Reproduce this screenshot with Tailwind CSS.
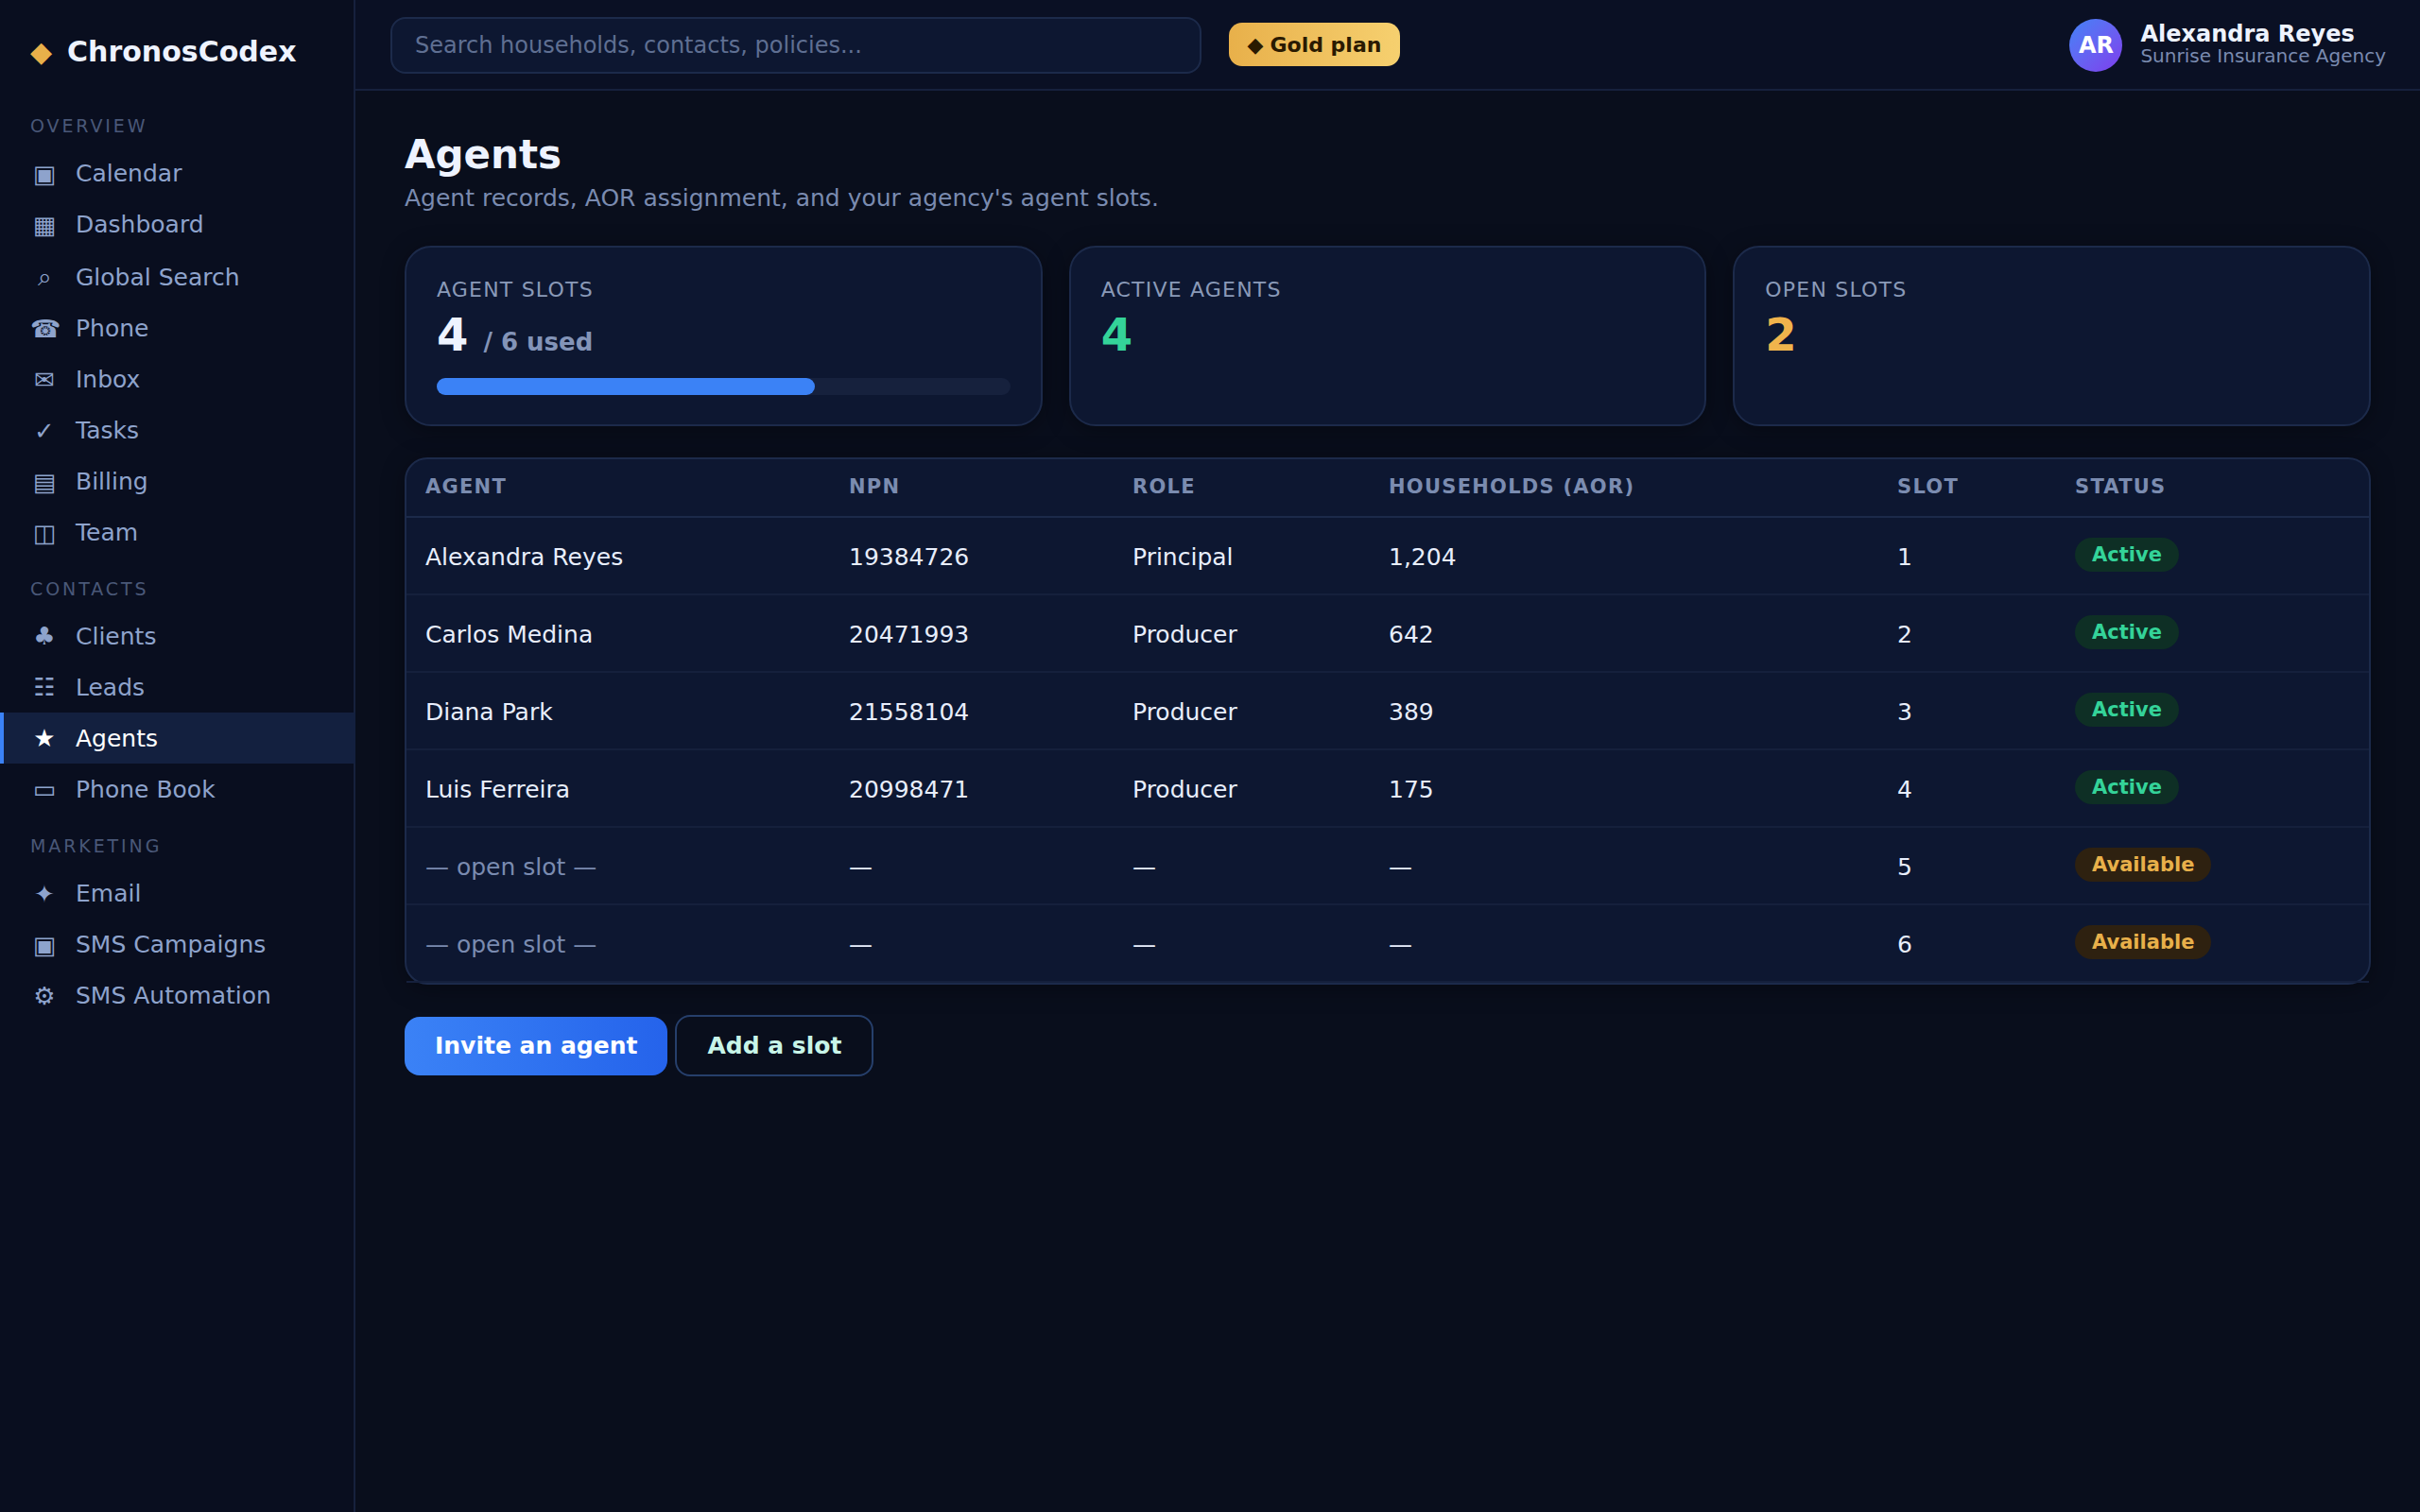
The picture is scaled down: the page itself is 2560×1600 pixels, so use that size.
<!DOCTYPE html>
<html lang="en">
<head>
    <meta charset="UTF-8">
    <title>Agents - ChronosCodex</title>
    <script src="https://cdn.jsdelivr.net/npm/@tailwindcss/browser@4"></script>
</head>
<body class="flex h-screen overflow-hidden bg-[#090e1c] font-['DejaVu_Sans',sans-serif] text-[25px] text-[#e8eefc]">
    <!-- Sidebar -->
    <aside class="w-[376px] shrink-0 border-r-2 border-[#16213d] bg-[#090e1f]">
        <div class="flex h-[102px] items-center gap-[16px] pt-[6px] pl-[32px] text-[30px] font-bold text-[#eef3ff]">
            <span class="text-[#e8b04a]">◆</span>
            <span>ChronosCodex</span>
        </div>
        <nav class="text-[#8ea3cc]">
            <p class="mt-[17px] mb-[9px] pl-[32px] text-[19px] tracking-[2.9px] text-[#4a5878]">OVERVIEW</p>
            <a class="flex items-center gap-[18px] py-3 pl-[32px] leading-[normal]"><span class="w-[30px] text-center text-[26px]">▣</span>Calendar</a>
            <a class="flex items-center gap-[18px] py-3 pl-[32px] leading-[normal]"><span class="w-[30px] text-center text-[26px]">▦</span>Dashboard</a>
            <a class="flex items-center gap-[18px] pt-[13px] pb-3 pl-[32px] leading-[normal]"><span class="w-[30px] text-center text-[26px]">⌕</span>Global Search</a>
            <a class="flex items-center gap-[18px] py-3 pl-[32px] leading-[normal]"><span class="w-[30px] text-center text-[26px]">☎</span>Phone</a>
            <a class="flex items-center gap-[18px] py-3 pl-[32px] leading-[normal]"><span class="w-[30px] text-center text-[26px]">✉</span>Inbox</a>
            <a class="flex items-center gap-[18px] py-3 pl-[32px] leading-[normal]"><span class="w-[30px] text-center text-[26px]">✓</span>Tasks</a>
            <a class="flex items-center gap-[18px] py-3 pl-[32px] leading-[normal]"><span class="w-[30px] text-center text-[26px]">▤</span>Billing</a>
            <a class="flex items-center gap-[18px] py-3 pl-[32px] leading-[normal]"><span class="w-[30px] text-center text-[26px]">◫</span>Team</a>

            <p class="mt-[18px] mb-[9px] pl-[32px] text-[19px] tracking-[2.9px] text-[#4a5878]">CONTACTS</p>
            <a class="flex items-center gap-[18px] py-3 pl-[32px] leading-[normal]"><span class="w-[30px] text-center text-[26px]">♣</span>Clients</a>
            <a class="flex items-center gap-[18px] py-3 pl-[32px] leading-[normal]"><span class="w-[30px] text-center text-[26px]">☷</span>Leads</a>
            <a class="-mr-[2px] flex items-center gap-[18px] border-l-4 border-[#3b82f6] bg-[#13203f] py-3 pl-[28px] leading-[normal] text-white"><span class="w-[30px] text-center text-[26px]">★</span>Agents</a>
            <a class="flex items-center gap-[18px] py-3 pl-[32px] leading-[normal]"><span class="w-[30px] text-center text-[26px]">▭</span>Phone Book</a>

            <p class="mt-[19px] mb-[9px] pl-[32px] text-[19px] tracking-[2.9px] text-[#4a5878]">MARKETING</p>
            <a class="flex items-center gap-[18px] py-3 pl-[32px] leading-[normal]"><span class="w-[30px] text-center text-[26px]">✦</span>Email</a>
            <a class="flex items-center gap-[18px] py-3 pl-[32px] leading-[normal]"><span class="w-[30px] text-center text-[26px]">▣</span>SMS Campaigns</a>
            <a class="flex items-center gap-[18px] py-3 pl-[32px] leading-[normal]"><span class="w-[30px] text-center text-[26px]">⚙</span>SMS Automation</a>
        </nav>
    </aside>

    <div class="min-w-0 flex-1">
        <!-- Top bar -->
        <header class="flex h-[96px] items-center border-b-2 border-[#16213d] bg-[#0a1024] pt-[2px] pr-[36px] pl-[37px]">
            <div class="flex h-[60px] w-[858px] items-center rounded-[16px] border-2 border-[#1c2a4a] bg-[#0d1731] pl-[24px] text-[24px] text-[#5f6f92]">Search households, contacts, policies...</div>
            <div class="mb-[2px] ml-[29px] flex h-[46px] w-[181px] items-center justify-center gap-[7px] rounded-[14px] bg-gradient-to-r from-[#e8b04a] to-[#f6d06f] text-[22px] font-bold text-[#2a1a00]"><span>◆</span><span>Gold plan</span></div>
            <div class="ml-auto flex items-center gap-[19px]">
                <div class="flex size-[56px] items-center justify-center rounded-full bg-gradient-to-br from-[#3b82f6] to-[#7c3aed] text-[24px] font-bold text-white">AR</div>
                <div class="leading-[23px]">
                    <div class="text-[24px] font-bold text-[#eef3ff]">Alexandra Reyes</div>
                    <div class="text-[20px] text-[#7a8bb0]">Sunrise Insurance Agency</div>
                </div>
            </div>
        </header>

        <main class="px-[52px] pt-[43px]">
            <h1 class="text-[42px] leading-[50px] font-bold text-[#eef3ff]">Agents</h1>
            <p class="mt-[2px] leading-[38px] text-[#7a8bb0]">Agent records, AOR assignment, and your agency's agent slots.</p>

            <!-- Stat cards -->
            <div class="mt-[31px] grid grid-cols-3 gap-[28px]">
                <div class="h-[191px] rounded-[28px] border-2 border-[#1c2a4a] bg-[#0d1731] px-[32px] pt-[28px] shadow-[0_4px_24px_rgba(0,0,0,0.35)]">
                    <div class="text-[22px] tracking-[1.2px] text-[#8a9ab8]">AGENT SLOTS</div>
                    <div class="flex items-baseline gap-[16px] font-bold">
                        <span class="text-[48px] leading-[62px] text-[#eef3ff]">4</span>
                        <span class="text-[26px] text-[#8394b8]">/ 6 used</span>
                    </div>
                    <div class="mt-[15px] h-[18px] rounded-full bg-[#16213d]">
                        <div class="h-full rounded-full bg-[#3b82f6]" style="width: 66%"></div>
                    </div>
                </div>
                <div class="h-[191px] rounded-[28px] border-2 border-[#1c2a4a] bg-[#0d1731] px-[32px] pt-[28px] shadow-[0_4px_24px_rgba(0,0,0,0.35)]">
                    <div class="text-[22px] tracking-[1.2px] text-[#8a9ab8]">ACTIVE AGENTS</div>
                    <div class="text-[48px] leading-[62px] font-bold text-[#34d399]">4</div>
                </div>
                <div class="h-[191px] rounded-[28px] border-2 border-[#1c2a4a] bg-[#0d1731] px-[32px] pt-[28px] shadow-[0_4px_24px_rgba(0,0,0,0.35)]">
                    <div class="text-[22px] tracking-[1.2px] text-[#8a9ab8]">OPEN SLOTS</div>
                    <div class="text-[48px] leading-[62px] font-bold text-[#f0b44c]">2</div>
                </div>
            </div>

            <!-- Agents table -->
            <div class="mt-[33px] rounded-[24px] border-2 border-[#1c2a4a] bg-[#0d1731] shadow-[0_4px_24px_rgba(0,0,0,0.35)]">
                <table class="w-full table-fixed border-collapse text-left">
                    <colgroup>
                        <col class="w-[448px]"><col class="w-[300px]"><col class="w-[271px]"><col class="w-[538px]"><col class="w-[188px]"><col>
                    </colgroup>
                    <thead class="text-[21px] tracking-[1.26px] text-[#7b8cb0]">
                        <tr class="h-[61px] border-b-2 border-[#1c2a4a]">
                            <th class="pb-[1px] pl-[20px]">AGENT</th><th class="pb-[1px] pl-[20px]">NPN</th><th class="pb-[1px] pl-[20px]">ROLE</th><th class="pb-[1px] pl-[20px]">HOUSEHOLDS (AOR)</th><th class="pb-[1px] pl-[20px]">SLOT</th><th class="pb-[1px] pl-[20px]">STATUS</th>
                        </tr>
                    </thead>
                    <tbody>
                        <tr class="h-[82px] border-b-2 border-[#15203c]">
                            <td class="pt-[4px] pl-[20px]">Alexandra Reyes</td><td class="pt-[4px] pl-[20px]">19384726</td><td class="pt-[4px] pl-[20px]">Principal</td><td class="pt-[4px] pl-[20px]">1,204</td><td class="pt-[4px] pl-[20px]">1</td>
                            <td class="pl-[20px]"><span class="inline-block rounded-full bg-[#0e2f25] px-[18px] align-[2px] text-[21px] leading-[36px] font-bold text-[#34d399]">Active</span></td>
                        </tr>
                        <tr class="h-[82px] border-b-2 border-[#15203c]">
                            <td class="pt-[4px] pl-[20px]">Carlos Medina</td><td class="pt-[4px] pl-[20px]">20471993</td><td class="pt-[4px] pl-[20px]">Producer</td><td class="pt-[4px] pl-[20px]">642</td><td class="pt-[4px] pl-[20px]">2</td>
                            <td class="pl-[20px]"><span class="inline-block rounded-full bg-[#0e2f25] px-[18px] align-[2px] text-[21px] leading-[36px] font-bold text-[#34d399]">Active</span></td>
                        </tr>
                        <tr class="h-[82px] border-b-2 border-[#15203c]">
                            <td class="pt-[4px] pl-[20px]">Diana Park</td><td class="pt-[4px] pl-[20px]">21558104</td><td class="pt-[4px] pl-[20px]">Producer</td><td class="pt-[4px] pl-[20px]">389</td><td class="pt-[4px] pl-[20px]">3</td>
                            <td class="pl-[20px]"><span class="inline-block rounded-full bg-[#0e2f25] px-[18px] align-[2px] text-[21px] leading-[36px] font-bold text-[#34d399]">Active</span></td>
                        </tr>
                        <tr class="h-[82px] border-b-2 border-[#15203c]">
                            <td class="pt-[4px] pl-[20px]">Luis Ferreira</td><td class="pt-[4px] pl-[20px]">20998471</td><td class="pt-[4px] pl-[20px]">Producer</td><td class="pt-[4px] pl-[20px]">175</td><td class="pt-[4px] pl-[20px]">4</td>
                            <td class="pl-[20px]"><span class="inline-block rounded-full bg-[#0e2f25] px-[18px] align-[2px] text-[21px] leading-[36px] font-bold text-[#34d399]">Active</span></td>
                        </tr>
                        <tr class="h-[82px] border-b-2 border-[#15203c]">
                            <td class="pt-[4px] pl-[20px] text-[#7a8bb0]">— open slot —</td><td class="pt-[4px] pl-[20px]">—</td><td class="pt-[4px] pl-[20px]">—</td><td class="pt-[4px] pl-[20px]">—</td><td class="pt-[4px] pl-[20px]">5</td>
                            <td class="pl-[20px]"><span class="inline-block rounded-full bg-[#2e2110] px-[18px] align-[2px] text-[21px] leading-[36px] font-bold text-[#e8b04a]">Available</span></td>
                        </tr>
                        <tr class="h-[82px] border-b-2 border-[#15203c]">
                            <td class="pt-[4px] pl-[20px] text-[#7a8bb0]">— open slot —</td><td class="pt-[4px] pl-[20px]">—</td><td class="pt-[4px] pl-[20px]">—</td><td class="pt-[4px] pl-[20px]">—</td><td class="pt-[4px] pl-[20px]">6</td>
                            <td class="pl-[20px]"><span class="inline-block rounded-full bg-[#2e2110] px-[18px] align-[2px] text-[21px] leading-[36px] font-bold text-[#e8b04a]">Available</span></td>
                        </tr>
                    </tbody>
                </table>
            </div>

            <div class="mt-[32px] flex items-center gap-[8px] font-bold">
                <button class="h-[62px] rounded-[16px] bg-gradient-to-r from-[#3b82f6] to-[#2563eb] px-[32px] text-white">Invite an agent</button>
                <button class="h-[65px] rounded-[16px] border-2 border-[#263f6b] bg-[#090e1c] px-[32px] text-[#c8f5e8]">Add a slot</button>
            </div>
        </main>
    </div>
</body>
</html>
